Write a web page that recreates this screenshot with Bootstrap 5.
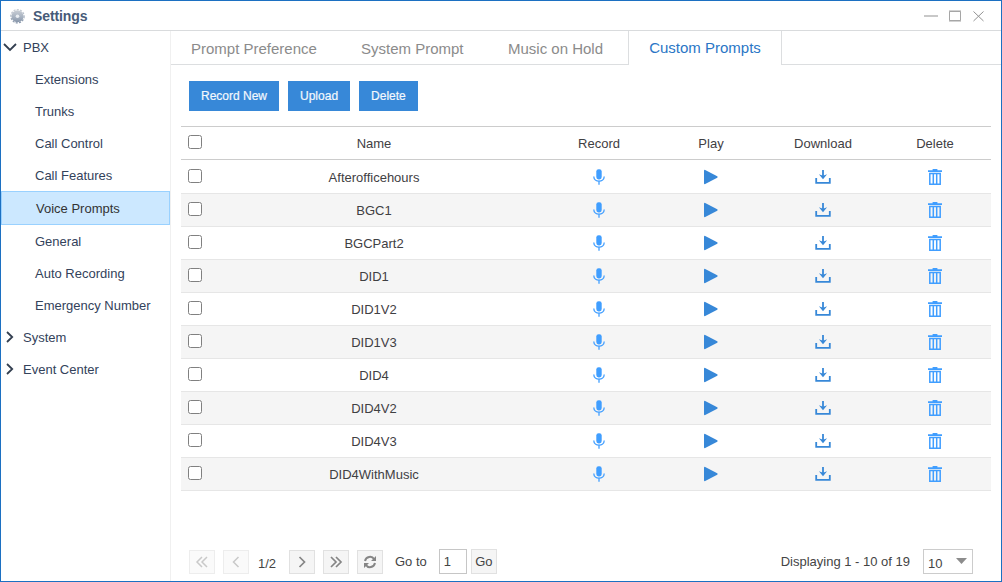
<!DOCTYPE html>
<html lang="en">
<head>
<meta charset="utf-8">
<title>Settings</title>
<link href="https://cdn.jsdelivr.net/npm/bootstrap@5.3.0/dist/css/bootstrap.min.css" rel="stylesheet">
<style>
body{font:13px/1.5 "Liberation Sans",Arial,sans-serif;color:#444;background:#fff}
svg{display:block;flex:none}
.window{width:1002px;height:582px;border:1px solid #1c70c2}
.titlebar{height:30px;border-bottom:1px solid #d9dbdd;padding:0 15px 0 9px}
.titlebar h1{font-size:14px;font-weight:700;color:#465a78;line-height:30px;padding-left:8px;letter-spacing:-.1px}
.sidebar{width:170px;border-right:1px solid #f0f0f0}
.sidebar .nav-link{height:32px;line-height:34px;padding:0 0 0 34px;color:#33425b;white-space:nowrap}
.sidebar .group-link{padding:2px 0 0 2px;line-height:30px;display:flex;align-items:center}
.group-link svg{margin:-2px 6px 0 0}
.sidebar .nav-link.active{height:34px;background:#cce8ff;border:1px solid #99d1ff;color:#333}
.tabs{height:34px;font-size:15px}
.tabs .nav-link{color:#8b8b8b;padding:0 0 0 20px;line-height:35px;height:34px;border-bottom:1px solid #dcdee0;white-space:nowrap}
.tabs .nav-link.active{color:#2a76c6;border:solid #dcdee0;border-width:0 1px;text-align:center;padding:0;line-height:33px;width:154px}
.tabs .filler{border-bottom:1px solid #dcdee0}
.toolbar{padding:16px 0 0 18px;gap:9px}
.toolbar .btn{--bs-btn-padding-x:12px;--bs-btn-padding-y:0;--bs-btn-font-size:12px;--bs-btn-border-radius:0;--bs-btn-border-width:0;--bs-btn-bg:#3788d8;--bs-btn-color:#f3f8fd;height:30px;line-height:30px;-webkit-text-stroke:.2px #f3f8fd}
.prompts{table-layout:fixed;border-collapse:separate;border-spacing:0;width:810px;margin:15px 0 0 10px;color:#3f4043}
.prompts th,.prompts td{--drop:0px;padding:calc(7px + var(--drop)) 0 0;height:33px;line-height:20px;font-weight:400;text-align:center;vertical-align:top;border:0 solid #e6e6e6;border-bottom-width:1px}
.prompts thead th{border-color:#ccc;border-top-width:1px;height:34px}
.prompts tbody tr:first-child td{--drop:1px;height:34px}
.prompts tbody tr:nth-child(even){background:#f5f5f5}
.prompts svg{margin:1px auto 0}
.prompts .low svg{margin-top:2px}
.prompts .form-check-input{display:block;width:14px;height:14px;margin:1px 0 0 7px;border:1px solid #808080;border-radius:2.5px}
.pager{height:25px;margin:auto 28px 7px 18px;color:#444}
.pager .btn{--bs-btn-padding-x:0;--bs-btn-padding-y:0;--bs-btn-font-size:13px;--bs-btn-border-radius:0;--bs-btn-bg:#f5f5f5;--bs-btn-border-color:#e1e1e1;--bs-btn-disabled-bg:#fafafa;--bs-btn-disabled-border-color:#ededed;width:26px;height:24px;margin:1px 8px 0 0;display:flex;align-items:center;justify-content:center;color:#858585}
.pager .btn:disabled{opacity:1;color:#c9c9c9}
.pager .btn.go{height:25px;margin:0;color:#444}
.pager .page-no{width:28px;height:25px;border:1px solid #c6c6c6;border-radius:0;padding:0 0 0 4px;font-size:13px;color:#444;margin:0 4px 0 12px}
.page-count{width:32px;padding:4px 0 0 1px}
.per-page{width:50px;height:25px;border:1px solid #ccc;padding:4px 5px 0 4px;margin-left:13px}
.per-page svg{margin-top:4px}
</style>
</head>
<body>
<svg width="0" height="0" class="position-absolute">
<symbol id="mic" viewBox="0 0 12 16"><rect x="3.3" y=".2" width="5.4" height="10.2" rx="2.3" fill="#409eff"/><path d="M.8 7.500c0 6.2 10.4 6.2 10.4 0M6 12.200v3.600" fill="none" stroke="#409eff" stroke-width="1.3"/></symbol>
<symbol id="play" viewBox="0 0 14 16"><path d="M1.2.9 13.2 7.2q1 .8 0 1.5L1.2 15.1Q0 15.4 0 14.3V1.7Q0 .6 1.2.9Z" fill="#3788d8"/></symbol>
<symbol id="download" viewBox="0 0 16 14"><path d="M1.200 8v4.900h13.600V8" fill="none" stroke="#3788d8" stroke-width="1.8"/><path d="M8 0v6" stroke="#3788d8" stroke-width="1.8"/><path d="m3.900 4.300 4.100 1.500 4.100-1.500L8 9.300Z" fill="#3788d8"/></symbol>
<symbol id="trash" viewBox="0 0 14 16"><path d="M0 1.200h4.600V0h4.800v1.200H14V3H0Z" fill="#409eff"/><path d="M1.800 4v11.200h10.400V4M5.300 5v10M8.700 5v10M1.100 4.600h11.800" fill="none" stroke="#409eff" stroke-width="1.500"/></symbol>
</svg>
<div class="window d-flex flex-column overflow-hidden">
  <header class="titlebar d-flex align-items-center flex-shrink-0">
    <svg width="15" height="16" viewBox="0 0 15 16"><defs><linearGradient id="steel" x2="0" y2="1"><stop stop-color="#c9ced5"/><stop offset=".6" stop-color="#a5b0bf"/><stop offset="1" stop-color="#8695a9"/></linearGradient></defs><circle cx="7.500" cy="8.200" r="6" fill="url(#steel)"/><circle cx="7.500" cy="8.200" r="6.600" fill="none" stroke="url(#steel)" stroke-width="1.300" stroke-dasharray="2.100 1.250"/><circle cx="7.500" cy="8.200" r="1.800" fill="#e9edf2"/></svg>
    <h1 class="mb-0 me-auto">Settings</h1>
    <svg width="62" height="14" viewBox="0 0 62 14" fill="none" stroke="#a6a6a6"><path d="M0 7h14" stroke="#c8c8c8" stroke-width="2"/><path d="M25.500 2.500h11v9h-11zM25 2h12M25 12h12"/><path d="m49.500 2.500 10 9.500m0-9.500-10 9.500" stroke="#929292"/></svg>
  </header>
  <div class="d-flex flex-grow-1">
    <nav class="sidebar nav flex-column flex-nowrap flex-shrink-0">
      <a class="nav-link group-link"><svg width="14" height="10" viewBox="0 0 14 10" fill="none" stroke="#333f50" stroke-width="1.8"><path d="m1 2 6 6 6-6"/></svg>PBX</a>
      <a class="nav-link">Extensions</a>
      <a class="nav-link">Trunks</a>
      <a class="nav-link">Call Control</a>
      <a class="nav-link">Call Features</a>
      <a class="nav-link active">Voice Prompts</a>
      <a class="nav-link">General</a>
      <a class="nav-link">Auto Recording</a>
      <a class="nav-link">Emergency Number</a>
      <a class="nav-link group-link"><svg width="14" height="12" viewBox="0 0 14 12" fill="none" stroke="#333f50" stroke-width="1.8"><path d="m4 1 5.200 5L4 11"/></svg>System</a>
      <a class="nav-link group-link"><svg width="14" height="12" viewBox="0 0 14 12" fill="none" stroke="#333f50" stroke-width="1.8"><path d="m4 1 5.200 5L4 11"/></svg>Event Center</a>
    </nav>
    <main class="d-flex flex-column flex-grow-1">
      <div class="tabs nav flex-nowrap flex-shrink-0">
        <a class="nav-link" style="width:170px">Prompt Preference</a>
        <a class="nav-link" style="width:147px">System Prompt</a>
        <a class="nav-link" style="width:140px">Music on Hold</a>
        <a class="nav-link active">Custom Prompts</a>
        <span class="filler flex-grow-1"></span>
      </div>
      <div class="toolbar d-flex">
        <button class="btn btn-primary">Record New</button>
        <button class="btn btn-primary">Upload</button>
        <button class="btn btn-primary">Delete</button>
      </div>
      <table class="prompts">
        <colgroup><col style="width:24px"><col style="width:338px"><col style="width:112px"><col style="width:112px"><col style="width:112px"><col style="width:112px"></colgroup>
        <thead><tr><th><input type="checkbox" class="form-check-input"></th><th>Name</th><th>Record</th><th>Play</th><th>Download</th><th>Delete</th></tr></thead>
        <tbody id="rows"></tbody>
      </table>
      <footer class="pager d-flex align-items-center">
        <button class="btn" disabled><svg width="14" height="14" viewBox="0 0 14 14" fill="none" stroke="currentColor" stroke-width="1.5"><path d="M7 2 2 7l5 5M12 2 7 7l5 5"/></svg></button>
        <button class="btn" disabled><svg width="14" height="14" viewBox="0 0 14 14" fill="none" stroke="currentColor" stroke-width="1.5"><path d="M9.500 2 4.500 7l5 5"/></svg></button>
        <span class="page-count">1/2</span>
        <button class="btn"><svg width="14" height="14" viewBox="0 0 14 14" fill="none" stroke="currentColor" stroke-width="1.7"><path d="m4.500 2 5 5-5 5"/></svg></button>
        <button class="btn"><svg width="14" height="14" viewBox="0 0 14 14" fill="none" stroke="currentColor" stroke-width="1.7"><path d="m2 2 5 5-5 5M7 2l5 5-5 5"/></svg></button>
        <button class="btn"><svg width="14" height="14" viewBox="0 0 14 14"><path d="M2 6C3 1.200 9 .6 11 4M12 8c-1 4.800-7 5.400-9 2" fill="none" stroke="currentColor" stroke-width="2"/><path d="M13 1v5H8ZM1 13V8h5Z" fill="currentColor"/></svg></button>
        <span style="margin-left:4px">Go to</span>
        <input class="page-no" value="1">
        <button class="btn go">Go</button>
        <span class="ms-auto">Displaying 1 - 10 of 19</span>
        <div class="per-page d-flex align-items-start justify-content-between">10<svg width="11" height="6" viewBox="0 0 11 6"><path d="M0 0h11L5.500 6Z" fill="#8c8c8c"/></svg></div>
      </footer>
    </main>
  </div>
</div>
<script src="https://cdn.jsdelivr.net/npm/bootstrap@5.3.0/dist/js/bootstrap.bundle.min.js"></script>
<script>
const names=["Afterofficehours","BGC1","BGCPart2","DID1","DID1V2","DID1V3","DID4","DID4V2","DID4V3","DID4WithMusic"];
const icon=(id,w,h)=>`<td${h<16?' class="low"':''}><svg width="${w}" height="${h}"><use href="#${id}"/></svg></td>`;
document.getElementById("rows").innerHTML=names.map(n=>`<tr><td><input type="checkbox" class="form-check-input"></td><td>${n}</td>${icon("mic",12,16)}${icon("play",14,16)}${icon("download",16,14)}${icon("trash",14,16)}</tr>`).join("");
</script>
</body>
</html>
